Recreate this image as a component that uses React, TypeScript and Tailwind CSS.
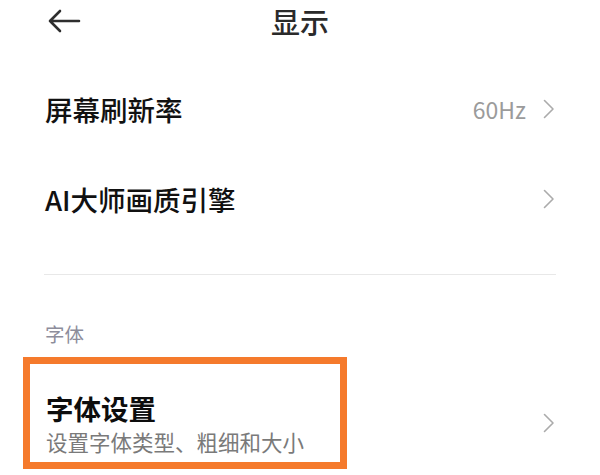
import React from "react";

const FONT = { fontFamily: '"Noto Sans CJK SC", "Noto Sans", sans-serif' };

function Chevron() {
  return (
    <svg width="12" height="20" viewBox="0 0 12 20" className="shrink-0">
      <polyline points="1.5,1.5 10,10 1.5,18.5" fill="none" stroke="#ababab" strokeWidth="1.6" strokeLinecap="round" strokeLinejoin="round" />
    </svg>
  );
}

function BackArrow() {
  return (
    <svg width="33" height="24" viewBox="0 0 33 24">
      <path d="M31 12H2M12 2L2 12l10 10" fill="none" stroke="#2e2e2e" strokeWidth="2.6" strokeLinecap="round" strokeLinejoin="round" />
    </svg>
  );
}

export default function App() {
  return (
    <div className="w-[600px] h-[475px] overflow-hidden bg-white" style={FONT}>
      {/* Header */}
      <div className="grid grid-cols-[1fr_auto_1fr] items-center h-[42px]">
        <div className="flex items-center pl-[48px]">
          <BackArrow />
        </div>
        <div className="text-[29px] leading-[34px] font-medium text-[#2a2a2a]">显示</div>
        <div />
      </div>

      {/* Rows */}
      <div className="mt-[22px]">
        <div className="flex items-center h-[90px] pl-[45px] pr-[45px]">
          <div className="flex-1 text-[27.5px] leading-[34px] font-medium text-[#111]">屏幕刷新率</div>
          <div className="flex items-center gap-[17px]">
            <span className="text-[23px] leading-[28px] text-[#9b9b9b]">60Hz</span>
            <Chevron />
          </div>
        </div>
        <div className="flex items-center h-[90px] pl-[45px] pr-[45px]">
          <div className="flex-1 text-[27.5px] leading-[34px] font-medium text-[#111]">AI大师画质引擎</div>
          <Chevron />
        </div>
      </div>

      {/* Divider */}
      <div className="mx-[44px] mt-[30px] h-px bg-[#e8e8e8]" />

      {/* Section label */}
      <div className="pl-[45px] mt-[46px] text-[19.5px] leading-[26px] text-[#8d8d9b]">字体</div>

      {/* Font settings row */}
      <div className="relative mt-[10px] h-[112px] flex items-start pl-[46px] pr-[45px] pt-[35px]">
        <div className="flex-1 flex flex-col">
          <div className="text-[27.5px] leading-[32px] font-bold text-[#0d0d0d]">字体设置</div>
          <div className="text-[21.5px] leading-[28px] text-[#7a7a7a] mt-[4px]">设置字体类型、粗细和大小</div>
        </div>
        <div className="mt-[21px]">
          <Chevron />
        </div>
        <div className="absolute left-[23px] top-0 w-[324px] h-[112px] border-[7px] border-[#f57a2c] pointer-events-none" />
      </div>
    </div>
  );
}
